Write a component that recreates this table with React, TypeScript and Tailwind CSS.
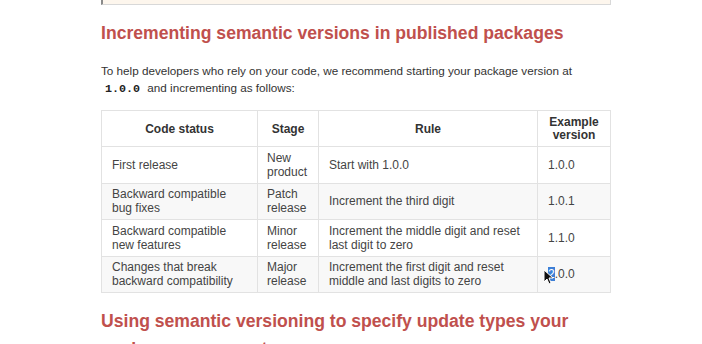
import React from "react";

interface Row {
  status: string;
  stage: string;
  rule: string;
  example: string;
}

const rows: Row[] = [
  { status: "First release", stage: "New product", rule: "Start with 1.0.0", example: "1.0.0" },
  {
    status: "Backward compatible bug fixes",
    stage: "Patch release",
    rule: "Increment the third digit",
    example: "1.0.1",
  },
  {
    status: "Backward compatible new features",
    stage: "Minor release",
    rule: "Increment the middle digit and reset last digit to zero",
    example: "1.1.0",
  },
  {
    status: "Changes that break backward compatibility",
    stage: "Major release",
    rule: "Increment the first digit and reset middle and last digits to zero",
    example: "2.0.0",
  },
];

const Cursor = () => (
  <svg
    className="absolute left-[5px] top-[12px]"
    width="10"
    height="16"
    viewBox="0 0 10 16"
  >
    <path d="M1 1 L1 13 L4 10 L6 15 L8 14 L6 9 L10 9 Z" fill="#111" stroke="#fff" strokeWidth="1" />
  </svg>
);

const App = () => {
  return (
    <div className="w-[702px] h-[344px] overflow-hidden bg-white font-['Liberation_Sans',Arial,sans-serif] text-[#333]">
      <div className="ml-[101px] w-[510px]">
        <div className="h-[5px] bg-[#fdf6ed] border-l-2 border-l-[#8a8a8a] border-b border-b-[#d8d8d8] border-r border-r-[#d8d8d8]" />

        <h2 className="mt-[16px] text-[17.6px] leading-[24px] font-bold text-[#c0504d]">
          Incrementing semantic versions in published packages
        </h2>

        <p className="mt-[17px] text-[11.7px] leading-[17px] text-[#333]">
          To help developers who rely on your code, we recommend starting your package version at
          <br />
          <code className="px-[4px] font-['Liberation_Mono',monospace] font-bold text-[11.7px] text-[#222]">1.0.0</code>{" "}
          and incrementing as follows:
        </p>

        <table className="mt-[12px] w-[509px] table-fixed border-collapse text-[12px] leading-[14px] text-[#444]">
          <colgroup>
            <col className="w-[156px]" />
            <col className="w-[61px]" />
            <col className="w-[219px]" />
            <col className="w-[73px]" />
          </colgroup>
          <thead>
            <tr className="h-[36px]">
              <th className="border border-[#e2e2e2] px-[10px] font-bold text-[#333]">Code status</th>
              <th className="border border-[#e2e2e2] px-[8px] font-bold text-[#333]">Stage</th>
              <th className="border border-[#e2e2e2] px-[10px] font-bold text-[#333]">Rule</th>
              <th className="border border-[#e2e2e2] px-[6px] font-bold text-[#333] leading-[13px]">
                Example version
              </th>
            </tr>
          </thead>
          <tbody>
            {rows.map((row, i) => (
              <tr key={row.status} className={`h-[36.5px] ${i % 2 === 1 ? "bg-[#f8f8f8]" : "bg-white"}`}>
                <td className="border border-[#e2e2e2] px-[10px] align-middle">{row.status}</td>
                <td className="border border-[#e2e2e2] px-[9px] align-middle">{row.stage}</td>
                <td className="border border-[#e2e2e2] px-[10px] align-middle">{row.rule}</td>
                <td className="relative border border-[#e2e2e2] px-[10px] align-middle">
                  {i === 3 ? (
                    <>
                      <span className="bg-[#3d7fd6] text-white">2</span>.0.0
                      <Cursor />
                    </>
                  ) : (
                    row.example
                  )}
                </td>
              </tr>
            ))}
          </tbody>
        </table>

        <h2 className="mt-[14px] text-[17.6px] leading-[28px] font-bold text-[#c0504d]">
          Using semantic versioning to specify update types your package can accept
        </h2>
      </div>
    </div>
  );
};

export default App;
